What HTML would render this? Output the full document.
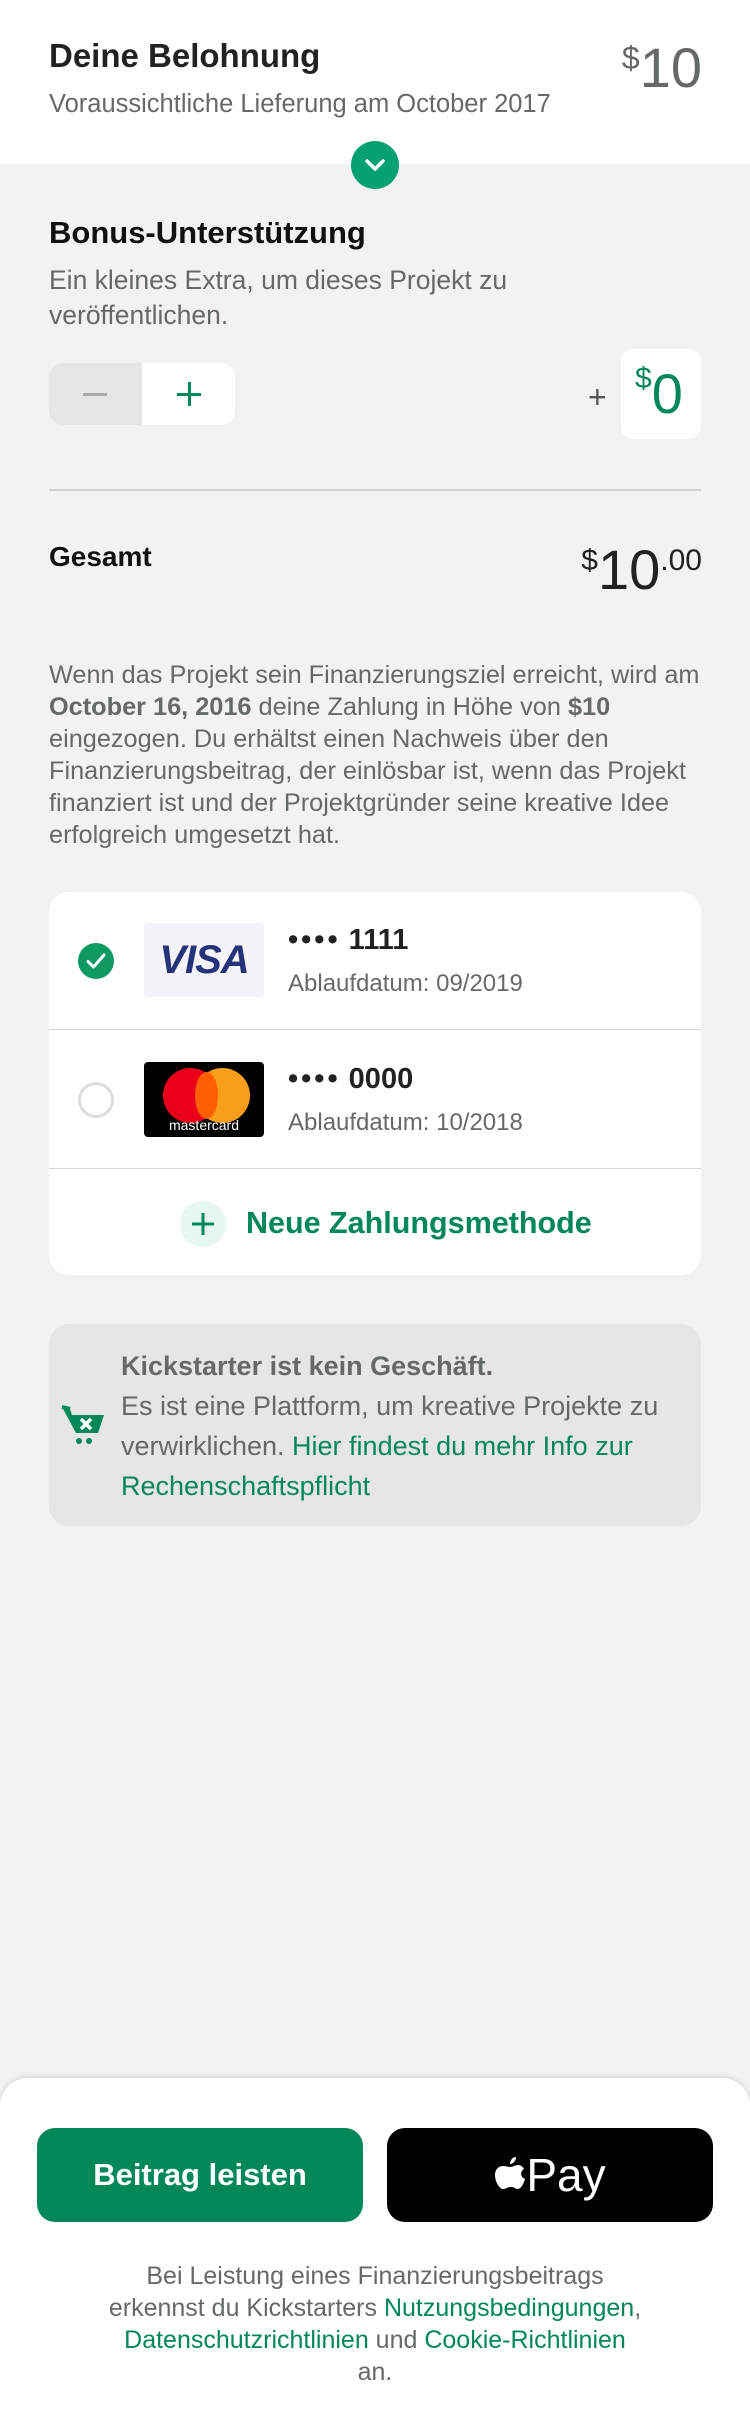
<!DOCTYPE html>
<html><head><meta charset="utf-8"><style>
*{margin:0;padding:0;box-sizing:border-box}
body{width:750px;height:2400px;background:#f2f2f2;font-family:"Liberation Sans",sans-serif;position:relative;overflow:hidden;color:#222}
.a{position:absolute}
.g{color:#028858}
.gr{color:#656969}
</style></head><body>
<div class="a" style="left:0;top:0;width:750px;height:164px;background:#fff"></div>
<div class="a" style="left:49px;top:37px;font-size:33px;font-weight:bold;color:#222">Deine Belohnung</div>
<div class="a gr" style="left:49px;top:90px;font-size:25.5px">Voraussichtliche Lieferung am October 2017</div>
<div class="a" style="right:48px;top:40px;font-size:56px;color:#656969;line-height:1"><span style="font-size:32px;vertical-align:top;position:relative;top:2px">$</span>10</div>
<div class="a" style="left:351px;top:141px;width:48px;height:48px;border-radius:50%;background:#05a170"><svg width="48" height="48" viewBox="0 0 48 48"><path d="M16 20 L24 28 L32 20" stroke="#fff" stroke-width="3.5" fill="none" stroke-linecap="round" stroke-linejoin="round"/></svg></div>

<div class="a" style="left:49px;top:215px;font-size:31px;font-weight:bold;color:#111">Bonus-Unterstützung</div>
<div class="a gr" style="left:49px;top:263px;font-size:26.5px;line-height:35px">Ein kleines Extra, um dieses Projekt zu<br>veröffentlichen.</div>
<div class="a" style="left:49px;top:363px;width:186px;height:62px;border-radius:14px;background:#fff;overflow:hidden">
<div style="position:absolute;left:0;top:0;width:93px;height:62px;background:#e6e6e6"></div>
<div style="position:absolute;left:34px;top:30px;width:24px;height:3px;background:#aaa"></div>
<div style="position:absolute;left:128px;top:30px;width:24px;height:3px;background:#028858"></div>
<div style="position:absolute;left:138.5px;top:19px;width:3px;height:24px;background:#028858"></div>
</div>
<div class="a" style="left:588px;top:381px;font-size:32px;color:#555;line-height:1">+</div>
<div class="a" style="left:621px;top:349px;width:80px;height:90px;border-radius:12px;background:#fff"></div>
<div class="a g" style="left:635px;top:366px;font-size:56px;line-height:1"><span style="font-size:30px;vertical-align:top;position:relative;top:-2px">$</span>0</div>
<div class="a" style="left:49px;top:489px;width:652px;height:2px;background:#d2d2d2"></div>
<div class="a" style="left:49px;top:541px;font-size:28px;font-weight:bold;color:#111">Gesamt</div>
<div class="a" style="right:48px;top:542px;font-size:56px;line-height:1;color:#222"><span style="font-size:30px;vertical-align:top;position:relative;top:4px">$</span>10<span style="font-size:30px;vertical-align:top;position:relative;top:4px">.00</span></div>
<div class="a gr" style="left:49px;top:659px;width:665px;font-size:25.3px;line-height:32px">Wenn das Projekt sein Finanzierungsziel erreicht, wird am <b>October 16, 2016</b> deine Zahlung in Höhe von <b>$10</b> eingezogen. Du erhältst einen Nachweis über den Finanzierungsbeitrag, der einlösbar ist, wenn das Projekt finanziert ist und der Projektgründer seine kreative Idee erfolgreich umgesetzt hat.</div>

<div class="a" style="left:49px;top:892px;width:652px;height:383px;border-radius:20px;background:#fff">
<div style="position:absolute;left:0;top:137px;width:652px;height:1px;background:#d6d6d6"></div>
<div style="position:absolute;left:0;top:276px;width:652px;height:1px;background:#d6d6d6"></div>
</div>
<div class="a" style="left:78px;top:943px;width:36px;height:36px;border-radius:50%;background:#0f9a64"><svg width="36" height="36"><path d="M10 18.5 L15.5 24 L26 12" stroke="#fff" stroke-width="3" fill="none" stroke-linecap="round" stroke-linejoin="round"/></svg></div>
<div class="a" style="left:144px;top:923px;width:120px;height:74px;border-radius:4px;background:#f4f4f8;text-align:center;line-height:74px;font-size:40px;font-weight:bold;font-style:italic;color:#26337a;letter-spacing:-1px">VISA</div>
<div class="a" style="left:288px;top:924px;font-size:29px;font-weight:bold;color:#222"><span style="letter-spacing:3px">••••</span> 1111</div>
<div class="a gr" style="left:288px;top:970px;font-size:24px">Ablaufdatum: 09/2019</div>
<div class="a" style="left:78px;top:1082px;width:36px;height:36px;border-radius:50%;border:3px solid #ddd"></div>
<div class="a" style="left:144px;top:1062px;width:120px;height:75px;border-radius:4px;background:#000;overflow:hidden">
<div style="position:absolute;left:19px;top:6px;width:55px;height:55px;border-radius:50%;background:#eb001b"></div>
<div style="position:absolute;left:51px;top:6px;width:55px;height:55px;border-radius:50%;background:#f79e1b"></div>
<div style="position:absolute;left:51px;top:10px;width:23px;height:47px;border-radius:50%;background:#ff5f00"></div>
<div style="position:absolute;left:0;top:55px;width:120px;text-align:center;color:#fff;font-size:14px">mastercard</div>
</div>
<div class="a" style="left:288px;top:1063px;font-size:29px;font-weight:bold;color:#222"><span style="letter-spacing:3px">••••</span> 0000</div>
<div class="a gr" style="left:288px;top:1109px;font-size:24px">Ablaufdatum: 10/2018</div>
<div class="a" style="left:180px;top:1201px;width:46px;height:46px;border-radius:50%;background:#e6f7ef"><svg width="46" height="46"><path d="M23 12 V34 M12 23 H34" stroke="#028858" stroke-width="3"/></svg></div>
<div class="a g" style="left:246px;top:1206px;font-size:30.5px;font-weight:bold">Neue Zahlungsmethode</div>

<div class="a" style="left:49px;top:1324px;width:652px;height:202px;border-radius:20px;background:#e6e6e6"></div>
<svg class="a" style="left:60px;top:1403px" width="48" height="46" viewBox="0 0 48 46"><path d="M2 4 L10 6 L12 12 L44 12 L38 30 L16 30 Z" fill="#028858"/><path d="M2 4 L10 6" stroke="#028858" stroke-width="4"/><path d="M21 16 L31 26 M31 16 L21 26" stroke="#fff" stroke-width="3.5"/><circle cx="19" cy="38" r="3" fill="#028858"/><circle cx="29" cy="38" r="3" fill="#028858"/></svg>
<div class="a gr" style="left:121px;top:1346px;width:580px;font-size:27px;line-height:40px"><b>Kickstarter ist kein Geschäft.</b><br>Es ist eine Plattform, um kreative Projekte zu verwirklichen. <span class="g">Hier findest du mehr Info zur Rechenschaftspflicht</span></div>

<div class="a" style="left:0;top:2078px;width:750px;height:340px;border-radius:28px 28px 0 0;background:#fff;box-shadow:0 -2px 6px rgba(0,0,0,0.1)"></div>
<div class="a" style="left:37px;top:2128px;width:326px;height:94px;border-radius:18px;background:#028858;color:#fff;font-size:31px;font-weight:bold;text-align:center;line-height:94px">Beitrag leisten</div>
<div class="a" style="left:387px;top:2128px;width:326px;height:94px;border-radius:18px;background:#000;color:#fff;text-align:center;line-height:94px;font-size:46px"><svg width="32" height="40" viewBox="0 0 32 40" style="vertical-align:-4px"><path d="M22 2 C22 6 19 9 16 9 C16 5 19 2 22 2 Z M16 12 C19 12 21 10 24 10 C27 10 29 12 30 14 C26 16 26 22 31 24 C30 28 27 34 24 34 C21 34 21 32 17 32 C13 32 12 34 9 34 C5 34 1 26 1 20 C1 14 5 11 9 11 C12 11 14 12 16 12 Z" fill="#fff"/></svg>Pay</div>
<div class="a gr" style="left:20px;top:2260px;width:710px;font-size:25px;line-height:32px;text-align:center">Bei Leistung eines Finanzierungsbeitrags<br>erkennst du Kickstarters <span class="g">Nutzungsbedingungen</span>,<br><span class="g">Datenschutzrichtlinien</span> und <span class="g">Cookie-Richtlinien</span><br>an.</div>
</body></html>
